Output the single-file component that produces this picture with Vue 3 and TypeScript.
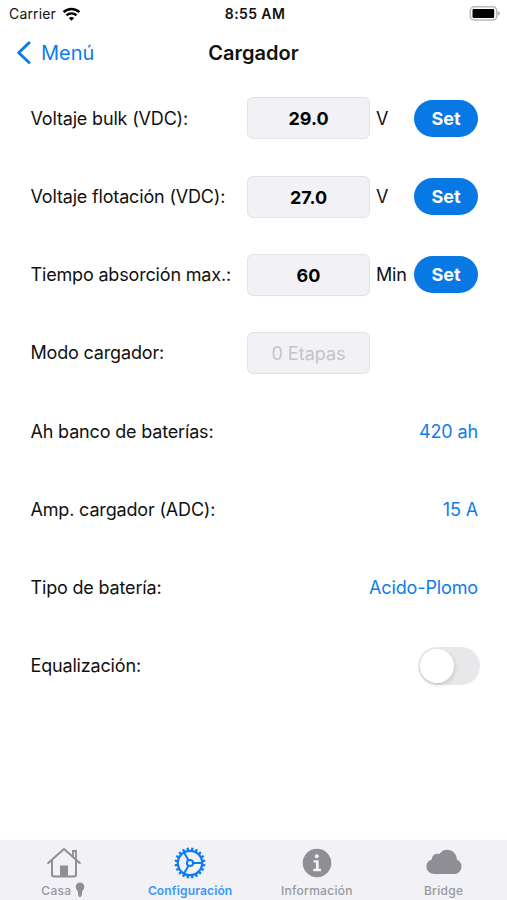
<script setup lang="ts">
import { ref } from 'vue'

interface Field {
  label: string
  value: string
  unit?: string
  disabled?: boolean
}

interface Detail {
  label: string
  value: string
}

const fields: Field[] = [
  { label: 'Voltaje bulk (VDC):', value: '29.0', unit: 'V' },
  { label: 'Voltaje flotación (VDC):', value: '27.0', unit: 'V' },
  { label: 'Tiempo absorción max.:', value: '60', unit: 'Min' },
  { label: 'Modo cargador:', value: '0 Etapas', disabled: true },
]

const details: Detail[] = [
  { label: 'Ah banco de baterías:', value: '420 ah' },
  { label: 'Amp. cargador (ADC):', value: '15 A' },
  { label: 'Tipo de batería:', value: 'Acido-Plomo' },
]

const equalize = ref(false)
const teeth: number[] = Array.from({ length: 20 }, (_, i) => i * 18 + 9)
</script>

<template>
  <div class="screen">
    <header class="status">
      <div class="carrier">
        <span>Carrier</span>
        <svg class="wifi" width="19" height="14" viewBox="0 0 18 14" fill="none" stroke="#000">
          <path d="M1.1 5.2C5.5.8 12.500.8 16.900 5.200" stroke-width="2.500" />
          <path d="M4 8.300C6.800 5.600 11.200 5.600 14 8.300" stroke-width="2.300" />
          <path d="M9 13.700L6.300 11C7.800 9.600 10.200 9.600 11.700 11Z" fill="#000" stroke="none" />
        </svg>
      </div>
      <span class="clock">8:55 AM</span>
      <svg class="battery" width="32" height="15" viewBox="0 0 32 15">
        <rect x="1.300" y=".8" width="26.500" height="13.200" rx="4" fill="#fff" stroke="#bbb" stroke-width="1.600" />
        <rect x="3.500" y="2.900" width="21.700" height="9" rx="1.200" fill="#000" />
        <path d="M29 5.200C31.400 6 31.400 8.800 29 9.600Z" fill="#aaa" />
      </svg>
    </header>

    <nav class="navbar">
      <a class="back">
        <svg width="15" height="24" viewBox="0 0 15 24" fill="none" stroke="#0a7cf0" stroke-width="2.900" stroke-linecap="round" stroke-linejoin="round">
          <path d="M13 1.900L2.700 11.700L13 21.500" />
        </svg>
        <span>Menú</span>
      </a>
      <h1>Cargador</h1>
    </nav>

    <main class="form">
      <div v-for="field in fields" :key="field.label" class="row">
        <span class="label">{{ field.label }}</span>
        <div class="box" :class="{ disabled: field.disabled }">{{ field.value }}</div>
        <span class="unit">{{ field.unit }}</span>
        <button v-if="field.unit" class="set">Set</button>
      </div>
      <div v-for="item in details" :key="item.label" class="row">
        <span class="label">{{ item.label }}</span>
        <a class="value">{{ item.value }}</a>
      </div>
      <div class="row">
        <span class="label">Equalización:</span>
        <button class="toggle" :class="{ on: equalize }" role="switch" :aria-checked="equalize" @click="equalize = !equalize">
          <span class="knob"></span>
        </button>
      </div>
    </main>

    <footer class="tabs">
      <a class="tab">
        <svg class="icon" width="36" height="34" viewBox="0 0 36 34" fill="none" stroke="currentColor" stroke-width="2">
          <path d="M3.200 17L19 3L34.800 17" stroke-linecap="round" stroke-linejoin="round" />
          <path d="M7 14V28.500Q7 30.500 9 30.500H29Q31 30.500 31 28.500V14" />
          <path d="M28 10.500V5H31V13.500" stroke-width="1.800" />
          <rect x="15" y="19.500" width="8" height="11" fill="currentColor" stroke="none" />
        </svg>
        <span class="caption">Casa
          <svg class="bulb" width="10" height="16" viewBox="0 0 10 16" fill="currentColor">
            <path d="M5 .5A4.300 4.300 0 0 0 .7 4.900C.7 7.200 2.600 8 3 10.200V12.500L4.200 15H5.800L7 12.500V10.200C7.400 8 9.300 7.200 9.300 4.900A4.300 4.300 0 0 0 5 .5Z" />
          </svg>
        </span>
      </a>
      <a class="tab active">
        <svg class="icon" width="36" height="34" viewBox="0 0 36 34" fill="none" stroke="currentColor" stroke-width="2">
          <circle cx="18" cy="17" r="12.200" stroke-width="2.200" />
          <path v-for="angle in teeth" :key="angle" d="M18 4.500V1.600" stroke-width="2.300" :transform="`rotate(${angle} 18 17)`" />
          <circle cx="18" cy="17" r="3.100" />
          <path d="M21 17H30M16.500 14.300L12 6.500M16.500 19.700L12 27.500" />
        </svg>
        <span class="caption">Configuración</span>
      </a>
      <a class="tab">
        <svg class="icon" width="36" height="34" viewBox="0 0 36 34" fill="currentColor">
          <circle cx="18" cy="17" r="14.300" />
          <g fill="#f1f1f6">
            <circle cx="17.800" cy="10.200" r="2" />
            <path d="M14.500 14.200H19.700V22.800H22V25.200H14.200V22.800H16.900V16.500H14.500Z" />
          </g>
        </svg>
        <span class="caption">Información</span>
      </a>
      <a class="tab">
        <svg class="icon" width="36" height="34" viewBox="0 0 36 34" fill="currentColor">
          <path d="M9 28C3.700 28 .5 24.600.5 20.500C.5 16.900 2.700 14.300 5.800 13.400C5.800 9.200 9.700 6.600 13.400 8.100C15.200 5.200 18 3.800 21 3.800C26.500 3.800 30.700 8 30.900 13.500C33.700 14.700 35.500 17.200 35.500 20.400C35.500 24.700 32.300 28 28 28Z" />
        </svg>
        <span class="caption">Bridge</span>
      </a>
    </footer>
  </div>
</template>

<style>
body {
  margin: 0;
  background: #fff;
}
</style>

<style scoped>
.screen {
  display: flex;
  flex-direction: column;
  box-sizing: border-box;
  width: 507px;
  height: 900px;
  overflow: hidden;
  color: #111;
  background: #fff;
  font-family: Inter, "Liberation Sans", sans-serif;
  font-size: 18px;
}
.status {
  display: grid;
  grid-template-columns: 1fr auto 1fr;
  align-items: center;
  height: 27px;
  padding: 0 6px 0 9px;
  font-size: 14px;
}
.carrier {
  display: flex;
  align-items: center;
  gap: 6px;
  letter-spacing: 0.15px;
}
.clock {
  font-weight: 600;
  font-size: 14px;
  letter-spacing: 0.4px;
}
.battery {
  justify-self: end;
}
.navbar {
  display: grid;
  grid-template-columns: 1fr auto 1fr;
  align-items: center;
  height: 51px;
  padding: 0 16px;
}
.back {
  display: flex;
  align-items: center;
  gap: 10px;
  color: #0a7cf0;
  font-size: 20px;
}
h1 {
  margin: 0;
  font-size: 20px;
  font-weight: 600;
}
.form {
  flex: 1;
  padding: 1.300px 27px 0 30px;
}
.row {
  display: flex;
  align-items: center;
  height: 78.200px;
}
.label {
  flex: 0 0 217px;
  letter-spacing: -0.17px;
  text-indent: 0.500px;
  white-space: nowrap;
}
.box {
  box-sizing: border-box;
  width: 123px;
  height: 42px;
  border: 1px solid #e3e3e6;
  border-radius: 6px;
  background: #f2f2f6;
  color: #000;
  font-weight: 700;
  line-height: 41px;
  text-align: center;
}
.box.disabled {
  color: #c4c4c8;
  font-weight: 400;
}
.unit {
  width: 37px;
  padding-left: 6px;
  margin-right: 1px;
  letter-spacing: -0.2px;
}
.set {
  width: 64px;
  height: 37px;
  padding: 0;
  border: 0;
  border-radius: 19px;
  background: #0878e4;
  color: #fff;
  font: inherit;
  font-weight: 700;
}
.value {
  margin-left: auto;
  margin-right: 2px;
  color: #0f7de8;
  letter-spacing: -0.12px;
}
.toggle {
  width: 62px;
  height: 38px;
  margin-left: auto;
  padding: 2px 1.500px;
  border: 0;
  border-radius: 19px;
  background: #e8e8ea;
}
.toggle.on {
  background: #34c759;
}
.knob {
  display: block;
  width: 34px;
  height: 34px;
  border-radius: 50%;
  background: #fff;
  box-shadow: 1px 2px 4px rgba(0, 0, 0, 0.14);
}
.toggle.on .knob {
  margin-left: auto;
}
.tabs {
  display: grid;
  grid-template-columns: repeat(4, 1fr);
  height: 60px;
  background: #f1f1f6;
}
.tab {
  display: flex;
  flex-direction: column;
  align-items: center;
  padding-top: 6px;
  color: #8e8f95;
}
.tab.active {
  color: #0a7cf8;
}
.caption {
  display: flex;
  align-items: center;
  gap: 4px;
  height: 20px;
  color: #98989d;
  font-size: 12px;
  font-weight: 500;
  letter-spacing: 0.3px;
}
.active .caption {
  color: #3c97f6;
  font-weight: 600;
  letter-spacing: 0.15px;
}
.bulb {
  color: #8e8f95;
}
</style>
